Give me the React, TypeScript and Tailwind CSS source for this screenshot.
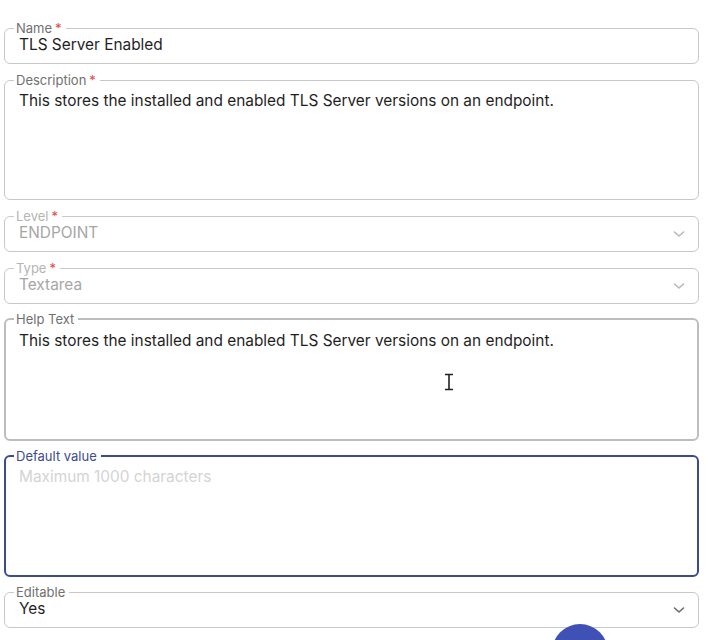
import React from "react";

type FieldProps = {
  label: string;
  required?: boolean;
  disabled?: boolean;
  state?: "normal" | "hover" | "focus";
  className?: string;
  children: React.ReactNode;
};

const Field: React.FC<FieldProps> = ({ label, required, disabled, state = "normal", className = "", children }) => {
  const border =
    state === "focus"
      ? "border-2 border-[#3c4b91] px-[11px]"
      : state === "hover"
      ? "border-2 border-[#bdbdbd] px-[11px]"
      : "border border-[#c8c8c8] px-3";
  const labelColor =
    state === "focus" ? "text-[#3c4b91]" : disabled ? "text-[#b4b4b4]" : "text-[#707070]";
  return (
    <fieldset className={`relative rounded-md ${border} ${className}`}>
      <legend className={`ml-[-3px] pl-[2px] pr-[4px] text-[13px] leading-[14px] ${labelColor}`}>
        {label}
        {required && <span className="ml-[3px] text-[#e04848]">*</span>}
      </legend>
      {children}
    </fieldset>
  );
};

const Chevron: React.FC<{ light?: boolean }> = ({ light }) => (
  <svg
    width="12"
    height="8"
    viewBox="0 0 12 8"
    className="absolute right-[13px] top-[7px]"
    fill="none"
    stroke={light ? "#b8b8b8" : "#6a6a6a"}
    strokeWidth="1.6"
    strokeLinecap="round"
    strokeLinejoin="round"
  >
    <path d="M1.5 2l4.5 4 4.5-4" />
  </svg>
);

const helpText = "This stores the installed and enabled TLS Server versions on an endpoint.";

const App: React.FC = () => {
  return (
    <div
      className="relative h-[640px] w-[711px] overflow-hidden bg-white"
      style={{ fontFamily: "Inter, 'Noto Sans', sans-serif" }}
    >
      <div className="ml-[4px] flex w-[695px] flex-col gap-[9px] pt-[21px]">
        <Field label="Name" required>
          <div className="pb-[8px] pl-[2px] text-[15.4px] leading-5 text-[#1f1f1f]">TLS Server Enabled</div>
        </Field>
        <Field label="Description" required>
          <div className="h-[112px] pl-[2px] pt-[4px] text-[15.4px] leading-5 text-[#1f1f1f]">{helpText}</div>
        </Field>
        <Field label="Level" required disabled>
          <div className="pb-[8px] pl-[2px] text-[15.4px] leading-5 text-[#a6a6a6]">ENDPOINT</div>
          <Chevron light />
        </Field>
        <Field label="Type" required disabled>
          <div className="pb-[8px] pl-[2px] text-[15.4px] leading-5 text-[#a6a6a6]">Textarea</div>
          <Chevron light />
        </Field>
        <Field label="Help Text" state="hover" className="mt-[-1px]">
          <div className="h-[113px] pl-[2px] pt-[5px] text-[15.4px] leading-5 text-[#1f1f1f]">{helpText}</div>
        </Field>
        <Field label="Default value" state="focus" className="mt-[-1px]">
          <div className="h-[112px] pl-[2px] pt-[4px] text-[15.4px] leading-5 text-[#d4d4d4]">
            Maximum 1000 characters
          </div>
        </Field>
        <Field label="Editable" className="mt-[-1px]">
          <div className="pb-[8px] pl-[2px] text-[15.4px] leading-5 text-[#1f1f1f]">Yes</div>
          <Chevron />
        </Field>
      </div>

      {/* text cursor */}
      <svg width="12" height="18" viewBox="0 0 12 18" className="absolute left-[443px] top-[373px]">
        <path d="M2 1.5h8M2 16.5h8M6 1.5v15" stroke="#222" strokeWidth="1.6" fill="none" />
      </svg>

      {/* floating action button */}
      <div className="absolute left-[552px] top-[624px] h-[56px] w-[56px] rounded-full bg-[#3f51b5]" />
    </div>
  );
};

export default App;
